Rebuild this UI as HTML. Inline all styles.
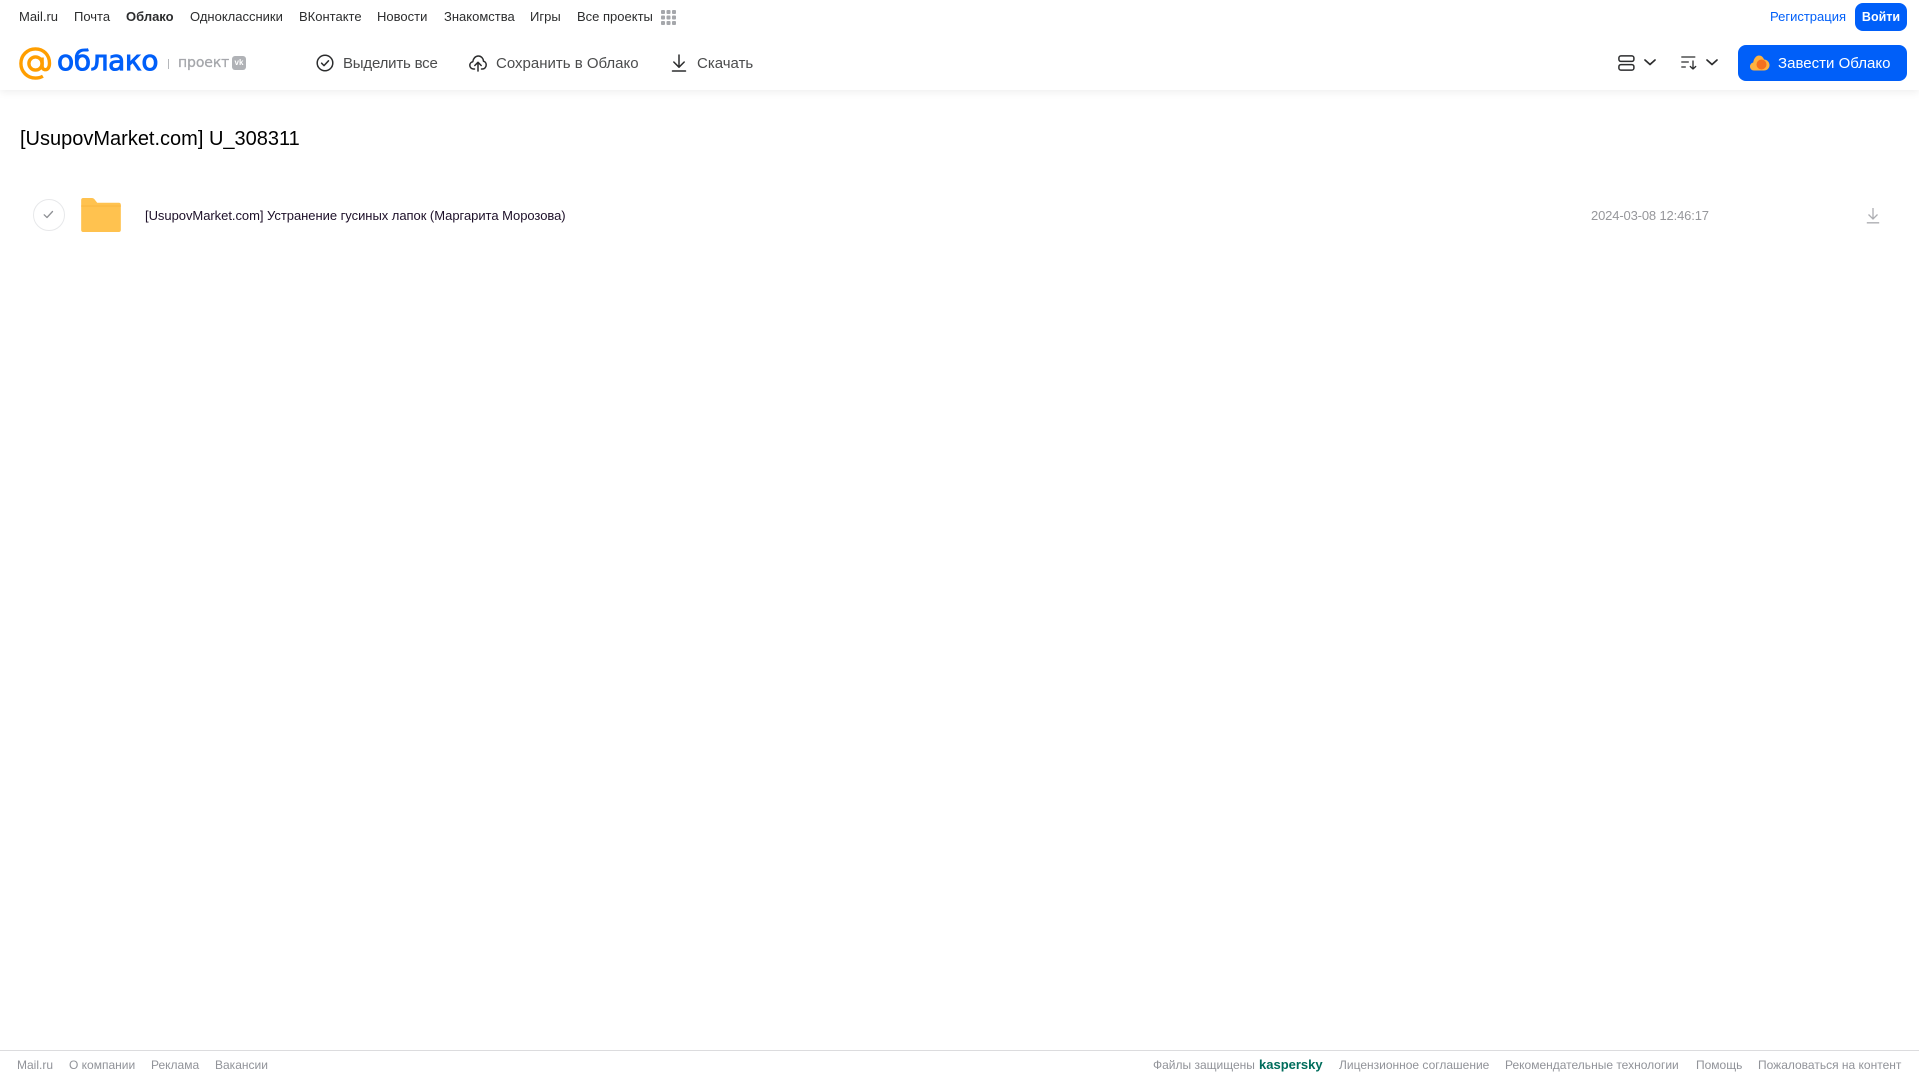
<!DOCTYPE html>
<html lang="ru"><head><meta charset="utf-8"><title>Облако</title>
<style>
html,body{margin:0;padding:0;background:#fff;width:1919px;height:1079px;overflow:hidden}
body{font-family:"Liberation Sans",Arial,sans-serif;position:relative}
.a{position:absolute;white-space:nowrap;line-height:1}
.t{font-size:13px;top:10px;color:#2c2d2e;line-height:13px}
.b{font-size:15px;top:56px;color:#4b4c4d}
.f{font-size:12px;top:1059px;color:#919399}
svg{position:absolute;overflow:visible}
</style></head><body>
<div class="a" style="left:0;top:0;width:1919px;height:90px;box-shadow:0 2px 8px rgba(0,0,0,.07)"></div>

<span class="a t" style="left:19px">Mail.ru</span>
<span class="a t" style="left:74px">Почта</span>
<span class="a t" style="left:126px;font-weight:bold">Облако</span>
<span class="a t" style="left:190px">Одноклассники</span>
<span class="a t" style="left:299px">ВКонтакте</span>
<span class="a t" style="left:377px">Новости</span>
<span class="a t" style="left:444px">Знакомства</span>
<span class="a t" style="left:530px">Игры</span>
<span class="a t" style="left:577px">Все проекты</span>
<svg style="left:661px;top:10px" width="15" height="15" fill="#a5a7ab"><rect x="0" y="0" width="4" height="4" rx="1"/><rect x="5.5" y="0" width="4" height="4" rx="1"/><rect x="11" y="0" width="4" height="4" rx="1"/><rect x="0" y="5.5" width="4" height="4" rx="1"/><rect x="5.5" y="5.5" width="4" height="4" rx="1"/><rect x="11" y="5.5" width="4" height="4" rx="1"/><rect x="0" y="11" width="4" height="4" rx="1"/><rect x="5.5" y="11" width="4" height="4" rx="1"/><rect x="11" y="11" width="4" height="4" rx="1"/></svg>

<span class="a t" style="left:1770px;color:#005ff9">Регистрация</span>
<div class="a" style="left:1855px;top:3px;width:52px;height:28px;border-radius:8px;background:#005ff9;color:#fff;font-size:12.5px;line-height:28px;text-align:center;font-weight:bold">Войти</div>

<!-- logo -->
<svg style="left:19px;top:47px" width="33" height="33" viewBox="0 0 33 33" fill="none" stroke="#ff9e00" stroke-width="3.4"><circle cx="16.5" cy="16.5" r="6.6"/><path d="M23.1 10.5v8.2c0 2.6 1.5 4 3.4 4 2.4 0 4-2.6 4-6.400C30.500 8 24.500 1.900 16.500 1.900 8.300 1.900 1.900 8.300 1.900 16.500s6.400 14.600 14.600 14.600c2.800 0 5.200-.6 7.400-1.900"/></svg>
<span class="a" style="left:57px;top:44px;font-family:'DejaVu Sans',sans-serif;font-size:28px;line-height:34px;color:#005ff9;-webkit-text-stroke:.9px #005ff9;letter-spacing:-.4px">облако</span>
<div class="a" style="left:168px;top:59px;width:1px;height:10px;background:#b5b7bb"></div>
<span class="a" style="left:178px;top:55px;font-family:'DejaVu Sans',sans-serif;font-size:14px;line-height:17px;color:#a5a7ab;-webkit-text-stroke:.3px #a5a7ab;letter-spacing:-.1px">проект</span>
<div class="a" style="left:232px;top:56px;width:14px;height:14px;border-radius:3px;background:#b0b2b6;color:#fff;font-size:8px;line-height:14px;text-align:center;font-weight:bold">vk</div>

<!-- actions -->
<svg style="left:316px;top:54px" width="18" height="18" viewBox="0 0 18 18" fill="none" stroke="#2c2d2e" stroke-width="1.500"><circle cx="9" cy="9" r="7.800"/><path d="M5.600 9.200l2.400 2.400 4.500-4.800" stroke-linecap="round" stroke-linejoin="round"/></svg>
<span class="a b" style="left:343px;letter-spacing:-.2px">Выделить все</span>
<svg style="left:469px;top:54px" width="18" height="18" viewBox="0 0 18 18" fill="none" stroke="#2c2d2e" stroke-width="1.500" stroke-linecap="round" stroke-linejoin="round"><path d="M5.500 15H4.500C2.300 15 .8 13.300.8 11.300c0-1.800 1.300-3.300 3-3.600C4.300 4.300 6.500 2 9.300 2c2.900 0 5 2.300 5.200 5.200 1.700.3 2.700 2 2.700 3.700 0 2.200-1.500 4.100-3.700 4.100h-1"/><path d="M9 17V8.500M5.800 11.500 9 8.300l3.200 3.200"/></svg>
<span class="a b" style="left:496px">Сохранить в Облако</span>
<svg style="left:671px;top:54px" width="16" height="18" viewBox="0 0 16 18" fill="none" stroke="#2c2d2e" stroke-width="1.500" stroke-linecap="round" stroke-linejoin="round"><path d="M8 1v12M2.800 8 8 13.200 13.200 8M1.500 17h13"/></svg>
<span class="a b" style="left:697px">Скачать</span>

<svg style="left:1618px;top:55px" width="17" height="16" viewBox="0 0 17 16" fill="none" stroke="#2c2d2e" stroke-width="1.500"><rect x=".9" y=".9" width="15" height="5.500" rx="2"/><rect x=".9" y="9.600" width="15" height="5.500" rx="2"/></svg>
<svg style="left:1644px;top:59px" width="12" height="7" viewBox="0 0 12 7" fill="none" stroke="#2c2d2e" stroke-width="1.700" stroke-linecap="round" stroke-linejoin="round"><path d="M1 1l5 4.500L11 1"/></svg>
<svg style="left:1681px;top:56px" width="16" height="14" viewBox="0 0 16 14" fill="none" stroke="#2c2d2e" stroke-width="1.300" stroke-linecap="round" stroke-linejoin="round"><path d="M.8 1h13M.8 6h6.500M.8 11h3.500M12 5v8M9.300 10.500 12 13l2.700-2.500"/></svg>
<svg style="left:1706px;top:59px" width="12" height="7" viewBox="0 0 12 7" fill="none" stroke="#2c2d2e" stroke-width="1.700" stroke-linecap="round" stroke-linejoin="round"><path d="M1 1l5 4.500L11 1"/></svg>

<div class="a" style="left:1738px;top:45px;width:169px;height:36px;border-radius:8px;background:#005ff9"></div>
<svg style="left:1750px;top:55px" width="20" height="16" viewBox="0 0 20 16"><path d="M4 15.500C1.800 15.500 0 13.800 0 11.500c0-2 1.400-3.600 3.200-4C3.900 3.400 6.200.5 9 .5c2.400 0 4.300 1.700 5 4 3 .2 5.500 2.500 5.500 5.600 0 3-2.400 5.400-5.500 5.400z" fill="#ffb23f"/><circle cx="11.500" cy="9.500" r="5" fill="#f5701f"/></svg>
<span class="a" style="left:1778px;top:56px;font-size:15px;color:#fff;letter-spacing:.02px">Завести Облако</span>

<!-- title -->
<div class="a" style="left:20px;top:128px;font-size:20px;line-height:23px;color:#000">[UsupovMarket.com] U_308311</div>

<!-- row -->
<div class="a" style="left:33px;top:199px;width:30px;height:30px;border-radius:50%;border:1px solid #e7e8ea"></div>
<svg style="left:43px;top:210px" width="11" height="9" viewBox="0 0 11 9" fill="none" stroke="#8f9195" stroke-width="1.300" stroke-linecap="round" stroke-linejoin="round"><path d="M1.200 4.800 4 7.500 9.500 1.500"/></svg>
<svg style="left:81px;top:198px" width="40" height="34" viewBox="0 0 42 36"><path d="M2 0h9c2 0 3 1 4 2.500L17 5h23c1.100 0 2 .9 2 2v27c0 1.100-.9 2-2 2H2c-1.100 0-2-.9-2-2V2C0 .9.900 0 2 0z" fill="#ffc24f"/><rect x="0" y="8" width="42" height="1" fill="#fab43e"/></svg>
<div class="a" style="left:145px;top:209px;font-size:13px;line-height:13px;color:#1d1029;letter-spacing:-.04px">[UsupovMarket.com] Устранение гусиных лапок (Маргарита Морозова)</div>
<div class="a" style="left:1591px;top:209px;font-size:13px;line-height:13px;color:#96979b;letter-spacing:-.15px">2024-03-08 12:46:17</div>
<svg style="left:1866px;top:207px" width="14" height="17" viewBox="0 0 14 17" fill="none" stroke="#adaeb2" stroke-width="1.300"><path d="M7 1v11M2.500 7.500 7 12l4.500-4.500M.8 15.800h12.400"/></svg>

<!-- footer -->
<div class="a" style="left:0;top:1050px;width:1919px;height:1px;background:#dcdcde"></div>
<span class="a f" style="left:17px">Mail.ru</span>
<span class="a f" style="left:69px">О компании</span>
<span class="a f" style="left:151px">Реклама</span>
<span class="a f" style="left:215px">Вакансии</span>
<span class="a f" style="left:1153px">Файлы защищены</span>
<span class="a" style="left:1259px;top:1058px;font-size:13px;font-weight:bold;color:#006d5c">kaspersky</span>
<span class="a f" style="left:1339px">Лицензионное соглашение</span>
<span class="a f" style="left:1505px">Рекомендательные технологии</span>
<span class="a f" style="left:1696px">Помощь</span>
<span class="a f" style="left:1758px">Пожаловаться на контент</span>
</body></html>
